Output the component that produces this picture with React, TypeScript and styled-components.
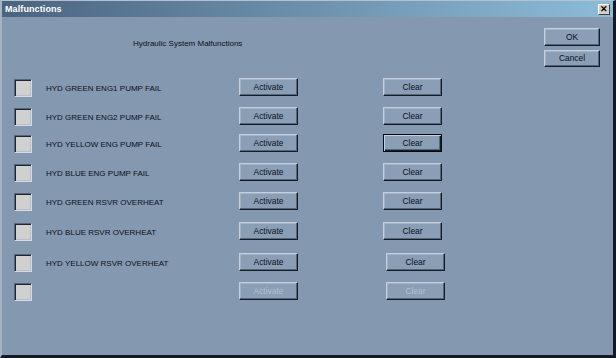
import styled, { createGlobalStyle } from 'styled-components'

const GlobalStyle = createGlobalStyle`
  html, body {
    margin: 0;
    padding: 0;
    overflow: hidden;
    background: #1a2028;
  }
  * {
    box-sizing: border-box;
  }
`

const Window = styled.div`
  width: 616px;
  height: 358px;
  display: flex;
  flex-direction: column;
  background-color: #8498b0;
  border-top: 1px solid #b4c2d0;
  border-left: 2px solid #a4b4c6;
  border-right: 3px solid #141a22;
  border-bottom: 3px solid #141a22;
  font-family: 'Liberation Sans', Arial, sans-serif;
  color: #0a1018;
`

const TitleBar = styled.div`
  height: 16px;
  display: flex;
  align-items: center;
  justify-content: space-between;
  padding: 0 3px 0 3px;
  background: linear-gradient(to right, #4a6480 0%, #6a8ca8 45%, #8cbcd8 100%);
`

const TitleText = styled.span`
  font-size: 9px;
  font-weight: bold;
  color: #ffffff;
  letter-spacing: 0.1px;
`

const CloseButton = styled.button`
  width: 12px;
  height: 11px;
  padding: 0;
  margin-top: 1px;
  display: flex;
  align-items: center;
  justify-content: center;
  background-color: #d4d0c8;
  border: 1px solid;
  border-color: #ffffff #404040 #404040 #ffffff;
  font-family: 'Liberation Sans', Arial, sans-serif;
  font-size: 9px;
  font-weight: bold;
  line-height: 1;
  color: #000;
`

const Body = styled.div`
  flex: 1;
  display: flex;
  flex-direction: column;
  padding: 11px 0 0 12px;
`

const TopSection = styled.div`
  display: flex;
  height: 39px;
`

const Heading = styled.div`
  margin-left: 119px;
  margin-top: 10px;
  width: 300px;
  font-size: 8px;
  line-height: 12px;
`

const DialogActions = styled.div`
  margin-left: 111px;
  display: flex;
  flex-direction: column;
  gap: 4px;
`

const Button = styled.button<{ $width?: number; $focused?: boolean; $disabled?: boolean }>`
  display: block;
  width: ${p => p.$width ?? 59}px;
  height: 18px;
  padding: 0;
  background-color: #8a9eb6;
  border: 1px solid;
  border-color: ${p => (p.$focused ? '#05080c' : '#c4d0de #141c26 #141c26 #c4d0de')};
  box-shadow: ${p =>
    p.$focused
      ? 'inset 1px 1px #c4d0de, inset -1px -1px #141c26, inset -2px -2px #56667a'
      : 'inset -1px -1px #56667a, inset 1px 1px #a2b2c4'};
  font-family: 'Liberation Sans', Arial, sans-serif;
  font-size: 8.4px;
  color: ${p => (p.$disabled ? '#b4c0ce' : '#0a1018')};
  cursor: default;
`

const RowList = styled.div`
  display: flex;
  flex-direction: column;
`

const Row = styled.div<{ $space: number }>`
  display: flex;
  align-items: center;
  height: 18px;
  margin-top: ${p => p.$space}px;
`

const CheckBox = styled.div`
  width: 18px;
  height: 18px;
  margin-top: 2px;
  background-color: #d0d0ce;
  border: 1px solid;
  border-color: #56667a #d2dce6 #d2dce6 #56667a;
  box-shadow: inset 1px 1px #1c2632, inset -1px -1px #b6bec8;
`

const Label = styled.span`
  width: 193px;
  margin-left: 14px;
  margin-top: 2px;
  font-size: 8px;
  white-space: nowrap;
`

const ClearSlot = styled.div<{ $shift: number }>`
  display: flex;
  margin-left: ${p => 85 + p.$shift}px;
`

type Malfunction = {
  label: string
  space: number
  focused?: boolean
  shift?: number
  disabled?: boolean
}

const malfunctions: Malfunction[] = [
  { label: 'HYD GREEN ENG1 PUMP FAIL', space: 11 },
  { label: 'HYD GREEN ENG2 PUMP FAIL', space: 11 },
  { label: 'HYD YELLOW ENG PUMP FAIL', space: 9, focused: true },
  { label: 'HYD BLUE ENG PUMP FAIL', space: 11 },
  { label: 'HYD GREEN RSVR OVERHEAT', space: 11 },
  { label: 'HYD BLUE RSVR OVERHEAT', space: 12 },
  { label: 'HYD YELLOW RSVR OVERHEAT', space: 13, shift: 3 },
  { label: '', space: 11, shift: 3, disabled: true },
]

const App = () => {
  return (
    <>
      <GlobalStyle />
      <Window>
        <TitleBar>
          <TitleText>Malfunctions</TitleText>
          <CloseButton>✕</CloseButton>
        </TitleBar>
        <Body>
          <TopSection>
            <Heading>Hydraulic System Malfunctions</Heading>
            <DialogActions>
              <Button $width={56}>OK</Button>
              <Button $width={56}>Cancel</Button>
            </DialogActions>
          </TopSection>
          <RowList>
            {malfunctions.map((m, idx) => (
              <Row key={idx} $space={m.space}>
                <CheckBox />
                <Label>{m.label}</Label>
                <Button $disabled={m.disabled}>Activate</Button>
                <ClearSlot $shift={m.shift ?? 0}>
                  <Button $focused={m.focused} $disabled={m.disabled}>Clear</Button>
                </ClearSlot>
              </Row>
            ))}
          </RowList>
        </Body>
      </Window>
    </>
  )
}

export default App
